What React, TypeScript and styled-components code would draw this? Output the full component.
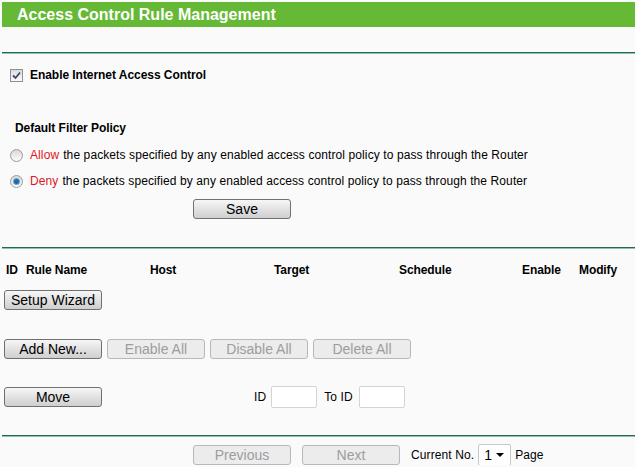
import styled, { createGlobalStyle } from "styled-components";

const GlobalStyle = createGlobalStyle`
    html, body {
        margin: 0;
        background: #fafafa;
        font-family: "Liberation Sans", Arial, sans-serif;
        font-size: 12px;
        letter-spacing: 0.1px;
        color: #000;
    }
`;

const Page = styled.div`
    width: 633px;
    padding: 2px 0 0 2px;
    display: flex;
    flex-direction: column;
`;

const TitleBar = styled.div`
    height: 25px;
    line-height: 25px;
    background: #66b935;
    color: #fff;
    font-size: 16px;
    font-weight: bold;
    letter-spacing: 0;
    padding-left: 15px;
`;

const Divider = styled.div<{ $top: number }>`
    margin-top: ${(p) => p.$top}px;
    height: 2px;
    background: linear-gradient(#1e6b5c 0 50%, #8fbfb2 50% 100%);
`;

const Row = styled.div<{ $top: number; $left?: number; $gap?: number }>`
    display: flex;
    align-items: center;
    height: 20px;
    margin-top: ${(p) => p.$top}px;
    padding-left: ${(p) => p.$left ?? 0}px;
    gap: ${(p) => p.$gap ?? 0}px;
`;

const Bold = styled.span`
    font-weight: bold;
    letter-spacing: -0.05px;
`;

const CheckBox = styled.span`
    width: 11px;
    height: 11px;
    border: 1px solid #8f8f8f;
    background: linear-gradient(#dcdcdc, #fbfbfb);
    display: flex;
    align-items: center;
    justify-content: center;
    margin-right: 7px;
`;

const Radio = styled.span<{ $on?: boolean }>`
    width: 11px;
    height: 11px;
    border-radius: 50%;
    border: 1px solid #9a9a9a;
    background: linear-gradient(#d8d8d8, #fcfcfc);
    display: flex;
    align-items: center;
    justify-content: center;
    margin-right: 7px;
    &::after {
        content: "";
        display: ${(p) => (p.$on ? "block" : "none")};
        width: 5px;
        height: 5px;
        border-radius: 50%;
        background: #1d6aa8;
        box-shadow: 0 0 0 1px #6fa6d3;
    }
`;

const Red = styled.span`
    color: #e0171c;
    margin-right: 4px;
`;

const Button = styled.button<{ $off?: boolean }>`
    width: 98px;
    height: 20px;
    padding: 0;
    font-family: "Liberation Sans", Arial, sans-serif;
    font-size: 14px;
    color: ${(p) => (p.$off ? "#9d9d9d" : "#000")};
    border: 1px solid ${(p) => (p.$off ? "#b8b8b8" : "#707070")};
    border-radius: 3px;
    background: ${(p) =>
        p.$off ? "#ececec" : "linear-gradient(#f7f7f7, #dedede 60%, #cfcfcf)"};
`;

const HeadGrid = styled.div`
    display: grid;
    grid-template-columns: 20px 124px 124px 125px 123px 57px auto;
    margin-top: 11px;
    padding-left: 4px;
    height: 20px;
    align-items: center;
    font-weight: bold;
    letter-spacing: -0.1px;
`;

const IdGroup = styled.div`
    display: flex;
    align-items: center;
    margin-left: 152px;
`;

const TextBox = styled.span<{ $gap: number }>`
    width: 44px;
    height: 20px;
    border: 1px solid #d4d4d4;
    border-radius: 2px;
    background: #fff;
    margin-left: ${(p) => p.$gap}px;
    margin-right: 7px;
`;

const Label = styled.span<{ $gap: number }>`
    margin-left: ${(p) => p.$gap}px;
`;

const Select = styled.span`
    width: 33px;
    height: 22px;
    border: 1px solid #c8c8c8;
    border-radius: 2px;
    background: #fff;
    display: flex;
    align-items: center;
    justify-content: space-between;
    padding: 0 6px 0 5px;
    box-sizing: border-box;
    font-size: 14px;
    margin: 0 4px 0 4px;
    &::after {
        content: "";
        border-left: 4px solid transparent;
        border-right: 4px solid transparent;
        border-top: 4px solid #000;
    }
`;

export default function App() {
    return (
        <Page>
            <GlobalStyle />
            <TitleBar>Access Control Rule Management</TitleBar>
            <Divider $top={25} />
            <Row $top={11} $left={8}>
                <CheckBox>
                    <svg width="9" height="9" viewBox="0 0 9 9">
                        <path d="M1 4.5 L3.5 7 L8 1.5" stroke="#3a4a6a" strokeWidth="1.8" fill="none" />
                    </svg>
                </CheckBox>
                <Bold>Enable Internet Access Control</Bold>
            </Row>
            <Row $top={33} $left={13}>
                <Bold>Default Filter Policy</Bold>
            </Row>
            <Row $top={7} $left={8}>
                <Radio />
                <Red>Allow</Red>the packets specified by any enabled access control policy to pass through the Router
            </Row>
            <Row $top={6} $left={8}>
                <Radio $on />
                <Red>Deny</Red>the packets specified by any enabled access control policy to pass through the Router
            </Row>
            <Row $top={8} $left={191}>
                <Button>Save</Button>
            </Row>
            <Divider $top={28} />
            <HeadGrid>
                <span>ID</span>
                <span>Rule Name</span>
                <span>Host</span>
                <span>Target</span>
                <span>Schedule</span>
                <span>Enable</span>
                <span>Modify</span>
            </HeadGrid>
            <Row $top={10} $left={2}>
                <Button>Setup Wizard</Button>
            </Row>
            <Row $top={29} $left={2} $gap={5}>
                <Button>Add New...</Button>
                <Button $off>Enable All</Button>
                <Button $off>Disable All</Button>
                <Button $off>Delete All</Button>
            </Row>
            <Row $top={28} $left={2}>
                <Button>Move</Button>
                <IdGroup>
                    ID<TextBox $gap={5} />To ID<TextBox $gap={6} />
                </IdGroup>
            </Row>
            <Divider $top={28} />
            <Row $top={8} $left={191}>
                <Button $off>Previous</Button>
                <Button $off style={{ marginLeft: 11 }}>Next</Button>
                <Label $gap={11}>Current No.</Label>
                <Select>1</Select>
                Page
            </Row>
        </Page>
    );
}
